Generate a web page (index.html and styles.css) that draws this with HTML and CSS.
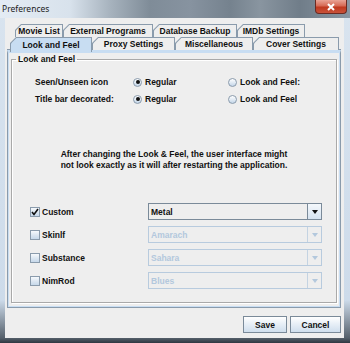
FILE: index.html
```html
<!DOCTYPE html>
<html lang="en">
<head>
    <meta charset="UTF-8">
    <title>Preferences</title>
    <link rel="stylesheet" href="styles.css">
</head>
<body>
<div class="window">
    <div class="titlebar">
        <span class="title">Preferences</span>
        <div class="close">
            <svg width="10" height="8" viewBox="0 0 10 8"><path d="M2 1 L8 7 M8 1 L2 7" stroke="#fff" stroke-width="2"/></svg>
        </div>
    </div>

    <div class="client">
        <div class="tabs">
            <div class="tab-row back">
                <div class="tab" style="width:48px"><span>Movie List</span></div>
                <div class="tab" style="width:90px"><span>External Programs</span></div>
                <div class="tab" style="width:84px"><span>Database Backup</span></div>
                <div class="tab" style="width:68px"><span>IMDb Settings</span></div>
            </div>
            <div class="tab-row front">
                <div class="tab selected" style="width:82px"><span>Look and Feel</span></div>
                <div class="tab" style="width:83px"><span>Proxy Settings</span></div>
                <div class="tab" style="width:78px"><span>Miscellaneous</span></div>
                <div class="tab" style="width:86px"><span>Cover Settings</span></div>
            </div>
        </div>

        <div class="tab-panel">
            <fieldset class="group">
                <legend>Look and Feel</legend>

                <div class="option-row">
                    <span class="opt-label">Seen/Unseen icon</span>
                    <label class="radio"><i class="dot on"></i>Regular</label>
                    <label class="radio"><i class="dot"></i>Look and Feel:</label>
                </div>
                <div class="option-row">
                    <span class="opt-label">Title bar decorated:</span>
                    <label class="radio"><i class="dot on"></i>Regular</label>
                    <label class="radio"><i class="dot"></i>Look and Feel</label>
                </div>

                <p class="note">After changing the Look &amp; Feel, the user interface might<br>not look exactly as it will after restarting the application.</p>

                <div class="laf-list">
                    <label class="check"><i class="box"><svg width="8" height="8" viewBox="0 0 8 8"><path d="M1 4 L3 6.5 L7 1" fill="none" stroke="#111" stroke-width="1.6"/></svg></i>Custom</label>
                    <div class="combo"><span class="value">Metal</span><span class="arrow"><i></i></span></div>

                    <label class="check"><i class="box"></i>Skinlf</label>
                    <div class="combo disabled"><span class="value">Amarach</span><span class="arrow"><i></i></span></div>

                    <label class="check"><i class="box"></i>Substance</label>
                    <div class="combo disabled"><span class="value">Sahara</span><span class="arrow"><i></i></span></div>

                    <label class="check"><i class="box"></i>NimRod</label>
                    <div class="combo disabled"><span class="value">Blues</span><span class="arrow"><i></i></span></div>
                </div>
            </fieldset>
        </div>

        <div class="buttons">
            <button class="btn save">Save</button>
            <button class="btn cancel">Cancel</button>
        </div>
    </div>
</div>
</body>
</html>
```

FILE: styles.css
```css
/* Basic Reset */
* {
    margin: 0;
    padding: 0;
    box-sizing: border-box;
}

body {
    width: 350px;
    height: 343px;
    overflow: hidden;
    background: #cfdcea;
    font-family: "Liberation Sans", Arial, sans-serif;
    font-size: 8.5px;
    font-weight: bold;
    color: #111;
}

.window {
    width: 350px;
    height: 343px;
    display: flex;
    flex-direction: column;
    background: linear-gradient(180deg, #d9e4ef 0, #cddbea 300px, #55606b 338px, #2e3640 343px);
}

/* title bar */
.titlebar {
    position: relative;
    height: 18px;
    flex: none;
    overflow: hidden;
    background: linear-gradient(90deg, #e4ecf4 0, #d8e2ec 70px, #a7b3be 110px, #7f8c98 150px, #8793a0 190px, #75828e 230px, #8995a0 260px, #707d89 300px, #8996a2 350px);
}

.title {
    position: absolute;
    left: 2px;
    top: 4px;
    font-family: "Noto Sans", "Liberation Sans", sans-serif;
    font-weight: normal;
    font-size: 8.5px;
    color: #1b1b1b;
    line-height: 10px;
}

.close {
    position: absolute;
    right: 3px;
    top: 0;
    width: 32px;
    height: 14px;
    border: 1px solid #6b2a22;
    border-top: none;
    border-radius: 0 0 4px 4px;
    background: linear-gradient(180deg, #e9a395 0, #d66a55 45%, #c0391f 55%, #c8523a 100%);
    display: flex;
    align-items: center;
    justify-content: center;
}

/* client area */
.client {
    flex: none;
    height: 320px;
    margin: 0 6px 0 5px;
    background: #eeeeee;
    padding: 6px 3px 0 2px;
    display: flex;
    flex-direction: column;
}

.tabs {
    display: flex;
    flex-direction: column;
}

.tab-row {
    display: flex;
    height: 13px;
}

.tab-row.back {
    margin-left: 8px;
}

.tab-row.front {
    margin-left: 3px;
}

.tab {
    height: 13px;
    background: #8a9bac;
    padding: 1px 1px 0 1px;
    clip-path: polygon(6px 0, 100% 0, 100% 100%, 0 100%, 0 6px);
}

.tab span {
    display: flex;
    align-items: center;
    justify-content: center;
    height: 100%;
    background: #eeeeee;
    clip-path: polygon(5.4px 0, 100% 0, 100% 100%, 0 100%, 0 5.4px);
    white-space: nowrap;
    line-height: 10px;
}

.tab.selected {
    position: relative;
    z-index: 1;
    height: 15px;
    margin-bottom: -2px;
}

.tab.selected span {
    background: #c8ddf2;
}

/* content of selected tab */
.tab-panel {
    height: 258px;
    border: 1px solid #8a9bac;
    border-top: 3px solid #c8ddf2;
    box-shadow: 0 -1px 0 #8a9bac, inset 1px 0 0 #c8ddf2, inset -1px 0 0 #c8ddf2, inset 0 -1px 0 #c8ddf2;
    padding: 1px 3px 4px 3px;
    display: flex;
}

.group {
    flex: 1;
    border: 1px solid #a9a9a9;
    box-shadow: inset 1px 1px 0 #fff, 1px 1px 0 #fff;
    padding: 0 0 0 0;
}

.group legend {
    margin-left: 4px;
    padding: 0 2px;
    line-height: 10px;
}

.option-row {
    display: grid;
    grid-template-columns: 98px 95px 1fr;
    align-items: center;
    height: 12px;
    margin-left: 23px;
    margin-bottom: 5px;
}

.option-row:first-of-type {
    margin-top: 12px;
}

.radio {
    display: flex;
    align-items: center;
    gap: 3px;
}

.dot {
    width: 9px;
    height: 9px;
    border-radius: 50%;
    border: 1px solid #8a9bac;
    background: linear-gradient(180deg, #ffffff 0, #dce7f2 60%, #c3d5e8 100%);
    display: flex;
    align-items: center;
    justify-content: center;
}

.dot.on::after {
    content: "";
    width: 4px;
    height: 4px;
    border-radius: 50%;
    background: #111;
}

.note {
    text-align: center;
    line-height: 11px;
    margin-top: 44px;
}

.laf-list {
    display: grid;
    grid-template-columns: 118px 174px;
    row-gap: 6px;
    align-items: center;
    margin: 32px 0 0 18px;
}

.check {
    display: flex;
    align-items: center;
    gap: 2px;
}

.box {
    width: 10px;
    height: 10px;
    border: 1px solid #8a9bac;
    background: linear-gradient(180deg, #f6f9fc 0, #d8e4f0 60%, #c6d8ea 100%);
    display: flex;
    align-items: center;
    justify-content: center;
}

.combo {
    height: 17px;
    border: 1px solid #7a8a99;
    background: #eeeeee;
    display: flex;
}

.combo .value {
    flex: 1;
    padding-left: 2px;
    display: flex;
    align-items: center;
}

.combo .arrow {
    width: 14px;
    border-left: 1px solid #7a8a99;
    background: linear-gradient(180deg, #f4f8fc 0, #d6e3f0 100%);
    display: flex;
    align-items: center;
    justify-content: center;
}

.combo .arrow i {
    width: 0;
    height: 0;
    border-left: 3.5px solid transparent;
    border-right: 3.5px solid transparent;
    border-top: 4px solid #111;
}

.combo.disabled {
    border-color: #b8cbde;
    color: #b3c8dd;
}

.combo.disabled .arrow {
    border-left-color: #c4d3e2;
    background: #eeeeee;
}

.combo.disabled .arrow i {
    border-top-color: #b3c8dd;
}

/* dialog buttons */
.buttons {
    display: flex;
    justify-content: flex-end;
    gap: 3px;
    margin-top: 8px;
}

.btn {
    height: 17px;
    border: 1px solid #7a8a99;
    background: linear-gradient(180deg, #ffffff 0, #e6eef6 50%, #cfdeed 100%);
    font-family: inherit;
    font-size: 8.5px;
    font-weight: bold;
    color: #111;
}

.btn.save {
    width: 44px;
}

.btn.cancel {
    width: 51px;
}
```
